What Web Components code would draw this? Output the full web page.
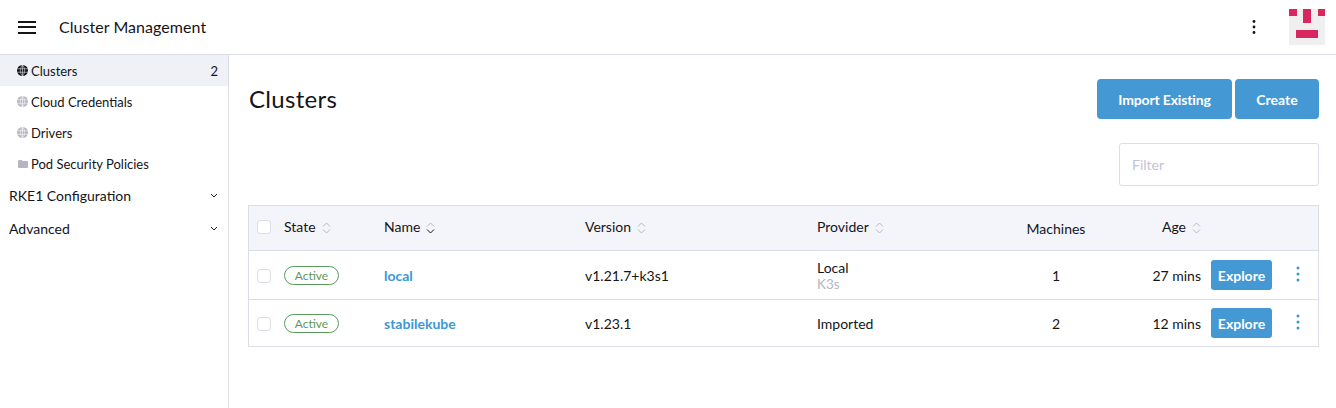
<!DOCTYPE html>
<html>
<head>
<meta charset="utf-8">
<style>
  html, body { margin: 0; height: 100%; background: #fff; overflow: hidden; }
  body { font: 14px Lato, "Liberation Sans", sans-serif; color: #141419; }
</style>
</head>
<body>
<cluster-app></cluster-app>
<script>
const globe = `<svg viewBox="0 0 10 10" width="11" height="11" fill="none" stroke="currentColor"><circle cx="5" cy="5" r="5" fill="currentColor" stroke="none"/><path stroke="var(--hole,#f0f1f6)" stroke-width=".5" d="M0 3.4h10M0 6.6h10M5 0v10M5 0C2.4 3 2.4 7 5 10M5 0c2.6 3 2.6 7 0 10"/></svg>`;
const folder = `<svg viewBox="0 0 10 8" width="10" height="8" fill="currentColor"><path d="M0 1a1 1 0 0 1 1-1h2.6l1 1H9a1 1 0 0 1 1 1v5a1 1 0 0 1-1 1H1a1 1 0 0 1-1-1z"/></svg>`;
const chevron = `<svg viewBox="0 0 8 5" width="8" height="5" fill="none" stroke="#22222a" stroke-width="1"><path d="M1 1l3 3 3-3"/></svg>`;

class NavItem extends HTMLElement {
  constructor() {
    super();
    this.attachShadow({ mode: "open" });
    const active = this.hasAttribute("active");
    const icon = this.getAttribute("icon") === "folder" ? folder : globe;
    this.shadowRoot.innerHTML = `
<style>
  :host { display: flex; align-items: center; height: 31px; padding: 0 10px 0 17px; font-size: 13px; color: #141419; background: ${active ? "#f0f1f6" : "transparent"}; }
  .ic { display: flex; align-items: center; justify-content: center; width: 11px; margin-right: 3px; color: ${active ? "#141419" : "#b6b6c2"}; --hole: ${active ? "#f0f1f6" : "#fff"}; }
  .label { flex: 1; }
</style>
<span class="ic">${icon}</span><span class="label"><slot></slot></span><span>${this.getAttribute("count") || ""}</span>`;
  }
}
customElements.define("nav-item", NavItem);

class NavGroup extends HTMLElement {
  constructor() {
    super();
    this.attachShadow({ mode: "open" });
    this.shadowRoot.innerHTML = `
<style>
  :host { display: flex; align-items: center; justify-content: space-between; height: 33px; padding: 0 10px 0 9px; font-size: 14px; }
</style>
<span><slot></slot></span>${chevron}`;
  }
}
customElements.define("nav-group", NavGroup);

class AppHeader extends HTMLElement {
  constructor() {
    super();
    this.attachShadow({ mode: "open" });
    this.shadowRoot.innerHTML = `
<style>
  :host { display: flex; align-items: center; height: 54px; border-bottom: 1px solid #dcdee7; box-sizing: content-box; }
  .burger { width: 18px; height: 13px; margin: 0 23px 0 18px; border-top: 2px solid #141419; border-bottom: 2px solid #141419; position: relative; box-sizing: border-box; }
  .burger::after { content: ""; position: absolute; left: 0; right: 0; top: 3.5px; height: 2px; background: #141419; }
  .title { flex: 1; font-size: 16px; letter-spacing: .05px; padding-bottom: 2px; }
  .dots { margin-right: 33px; display: flex; }
  .avatar { display: block; margin-right: 11px; }
</style>
<div class="burger"></div>
<div class="title">Cluster Management</div>
<svg class="dots" width="4" height="16" viewBox="0 0 4 16" fill="#141419"><circle cx="2" cy="2.5" r="1.4"/><circle cx="2" cy="8" r="1.4"/><circle cx="2" cy="13.5" r="1.4"/></svg>
<svg class="avatar" width="36" height="36" viewBox="0 0 36 36"><rect width="36" height="36" fill="#efefef"/><g fill="#d9265f"><rect width="8" height="7"/><rect x="14" width="8" height="14"/><rect x="29" width="7" height="7"/><rect x="7" y="21" width="22" height="8"/></g></svg>`;
  }
}
customElements.define("app-header", AppHeader);

class SideNav extends HTMLElement {
  constructor() {
    super();
    this.attachShadow({ mode: "open" });
    this.shadowRoot.innerHTML = `
<style>
  :host { display: block; width: 228px; flex: none; border-right: 1px solid #dcdee7; }
</style>
<slot></slot>`;
  }
}
customElements.define("side-nav", SideNav);

class BlueButton extends HTMLElement {
  constructor() {
    super();
    this.attachShadow({ mode: "open" });
    this.shadowRoot.innerHTML = `
<style>
  :host { display: inline-flex; align-items: center; justify-content: center; height: 40px; width: var(--btn-w, auto); background: #4498d3; color: #fff; border-radius: 4px; font-size: 14px; font-weight: 700; }
  :host([small]) { height: 30px; border-radius: 3px; }
</style>
<slot></slot>`;
  }
}
customElements.define("blue-button", BlueButton);

class SortHead extends HTMLElement {
  constructor() {
    super();
    this.attachShadow({ mode: "open" });
    const on = this.hasAttribute("down");
    const nosort = this.hasAttribute("nosort");
    const sort = nosort ? "" : `<svg width="9" height="14" viewBox="0 0 9 14" fill="none" stroke="#b6b6c2" stroke-width="1"><path d="M1 5.5L4.5 2 8 5.5"/><path stroke="${on ? "#141419" : "#b6b6c2"}" d="M1 8.5L4.5 12 8 8.5"/></svg>`;
    this.shadowRoot.innerHTML = `
<style>
  :host { display: inline-flex; align-items: center; gap: 6px; font-size: 14px; color: #141419; }
  span { margin-bottom: ${nosort ? 0 : 2}px; }
  svg { margin-top: 2px; }
</style>
<span><slot></slot></span>${sort}`;
  }
}
customElements.define("sort-head", SortHead);

class CheckBox extends HTMLElement {
  constructor() {
    super();
    this.attachShadow({ mode: "open" });
    this.shadowRoot.innerHTML = `
<style>
  :host { display: block; box-sizing: border-box; width: 14px; height: 14px; border: 1px solid #dcdee7; border-radius: 3px; background: #fff; }
</style>`;
  }
}
customElements.define("check-box", CheckBox);

class StateBadge extends HTMLElement {
  constructor() {
    super();
    this.attachShadow({ mode: "open" });
    this.shadowRoot.innerHTML = `
<style>
  :host { display: inline-flex; align-items: center; justify-content: center; box-sizing: border-box; width: 55px; height: 19px; border: 1px solid #5d995d; border-radius: 10px; color: #5d995d; font-size: 12px; }
</style>
<slot></slot>`;
  }
}
customElements.define("state-badge", StateBadge);

const columns = "35px 100px 201px 232px 183px 112px 89px 10px 61px 1fr";

class TableHead extends HTMLElement {
  constructor() {
    super();
    this.attachShadow({ mode: "open" });
    this.shadowRoot.innerHTML = `
<style>
  :host { display: grid; grid-template-columns: ${columns}; align-items: center; height: 44px; background: #f4f5fa; border-bottom: 1px solid #dcdee7; }
  .r { justify-self: end; }
  .c { justify-self: center; }
  check-box { margin: 0 0 2px 8px; }
  sort-head:not(.c) { margin-bottom: 2px; }
</style>
<check-box></check-box>
<sort-head>State</sort-head>
<sort-head down>Name</sort-head>
<sort-head>Version</sort-head>
<sort-head>Provider</sort-head>
<sort-head nosort class="c">Machines</sort-head>
<sort-head class="r">Age</sort-head>`;
  }
}
customElements.define("table-head", TableHead);

class ClusterRow extends HTMLElement {
  constructor() {
    super();
    this.attachShadow({ mode: "open" });
    const a = n => this.getAttribute(n) || "";
    const sub = a("sub") ? `<div class="sub">${a("sub")}</div>` : "";
    this.shadowRoot.innerHTML = `
<style>
  :host { display: grid; grid-template-columns: ${columns}; align-items: center; height: var(--row-h, 48px); font-size: 14px; border-bottom: 1px solid #dcdee7; }
  :host(:last-child) { border-bottom: 0; }
  check-box { margin: 2px 0 0 8px; }
  .name { color: #3d98d3; font-weight: 700; font-size: 14px; }
  .prov { line-height: 16px; padding-top: 2px; }
  .sub { color: #b6b6c2; font-size: 13.5px; line-height: 16px; }
  .c { justify-self: center; }
  .r { justify-self: end; }
  .btn { grid-column: 9; justify-self: stretch; }
  .kebab { justify-self: center; display: block; margin: 0 0 2px 6px; }
</style>
<check-box></check-box>
<div><state-badge>Active</state-badge></div>
<div class="name">${a("name")}</div>
<div>${a("version")}</div>
<div class="prov"><div>${a("provider")}</div>${sub}</div>
<div class="c">${a("machines")}</div>
<div class="r">${a("age")}</div>
<blue-button small class="btn">Explore</blue-button>
<svg class="kebab" width="4" height="16" viewBox="0 0 4 16" fill="#3d98d3"><circle cx="2" cy="2" r="1.5"/><circle cx="2" cy="8" r="1.5"/><circle cx="2" cy="14" r="1.5"/></svg>`;
  }
}
customElements.define("cluster-row", ClusterRow);

class ClusterTable extends HTMLElement {
  constructor() {
    super();
    this.attachShadow({ mode: "open" });
    this.shadowRoot.innerHTML = `
<style>
  :host { display: block; border: 1px solid #dcdee7; }
</style>
<slot></slot>`;
  }
}
customElements.define("cluster-table", ClusterTable);

class ClusterApp extends HTMLElement {
  constructor() {
    super();
    this.attachShadow({ mode: "open" });
    this.shadowRoot.innerHTML = `
<style>
  :host { display: flex; flex-direction: column; height: 100vh; }
  .body { flex: 1; display: flex; }
  main { flex: 1; min-width: 0; padding: 24px 17px 0 19px; }
  .top { display: flex; align-items: center; gap: 3px; height: 40px; }
  h1 { flex: 1; margin: 0 0 2px 1px; font-size: 24px; letter-spacing: .3px; font-weight: 400; }
  .filter { display: flex; justify-content: flex-end; margin: 24px 0 19px; }
  .input { box-sizing: border-box; width: 200px; height: 43px; border: 1px solid #dcdee7; border-radius: 3px; padding: 0 12px; display: flex; align-items: center; color: #c4c5d0; font-size: 14px; }
</style>
<app-header></app-header>
<div class="body">
  <side-nav>
    <nav-item active count="2">Clusters</nav-item>
    <nav-item>Cloud Credentials</nav-item>
    <nav-item>Drivers</nav-item>
    <nav-item icon="folder">Pod Security Policies</nav-item>
    <nav-group>RKE1 Configuration</nav-group>
    <nav-group>Advanced</nav-group>
  </side-nav>
  <main>
    <div class="top">
      <h1>Clusters</h1>
      <blue-button style="--btn-w:135px;letter-spacing:-.15px">Import Existing</blue-button>
      <blue-button style="--btn-w:84px">Create</blue-button>
    </div>
    <div class="filter"><div class="input">Filter</div></div>
    <cluster-table>
      <table-head></table-head>
      <cluster-row name="local" version="v1.21.7+k3s1" provider="Local" sub="K3s" machines="1" age="27 mins"></cluster-row>
      <cluster-row style="--row-h:46px" name="stabilekube" version="v1.23.1" provider="Imported" machines="2" age="12 mins"></cluster-row>
    </cluster-table>
  </main>
</div>`;
  }
}
customElements.define("cluster-app", ClusterApp);
</script>
</body>
</html>
